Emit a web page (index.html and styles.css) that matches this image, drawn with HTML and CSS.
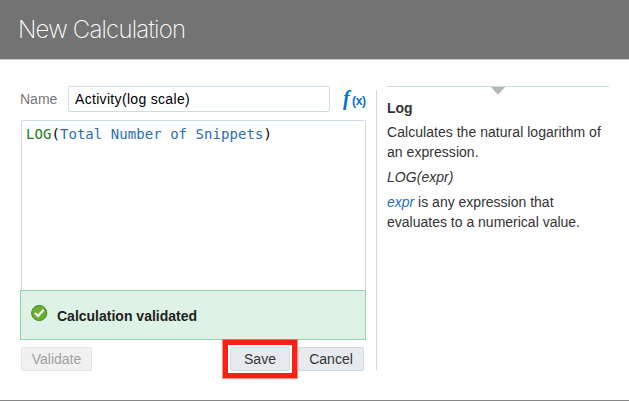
FILE: index.html
```html
<!DOCTYPE html>
<html lang="en">
<head>
<meta charset="utf-8">
<title>New Calculation</title>
<link rel="stylesheet" href="styles.css">
</head>
<body>
<div class="dialog">
  <header class="header"><h1>New Calculation</h1></header>
  <main class="body">
    <section class="editor">
      <div class="name-row">
        <label class="name-label">Name</label>
        <div class="name-input"><span>Activity(log scale)</span></div>
        <div class="fx"><span class="fx-f">f</span><span class="fx-x">(x)</span></div>
      </div>
      <div class="formula"><span class="fn">LOG</span>(<span class="col">Total Number of Snippets</span>)</div>
      <div class="message">
        <svg class="check" viewBox="0 0 17 17" width="17" height="17">
          <circle cx="8.2" cy="8" r="7.6" fill="#6aae2d" stroke="#468c2b" stroke-width="1"/>
          <path d="M3.9 8 7 10.9 12.7 4.8" fill="none" stroke="#fff" stroke-width="2.2"/>
        </svg>
        <strong>Calculation validated</strong>
      </div>
      <div class="buttons">
        <button class="btn validate" disabled>Validate</button>
        <div class="save-wrap"><button class="btn save">Save</button><span class="highlight"></span></div>
        <button class="btn cancel">Cancel</button>
      </div>
    </section>
    <aside class="help">
      <div class="collapse"><svg width="14" height="8" viewBox="0 0 14 8"><path d="M0 0H14L7 7.7Z" fill="#b7b7b7"/></svg></div>
      <h2>Log</h2>
      <p class="desc">Calculates the natural logarithm of<br>an expression.</p>
      <p class="syntax"><i>LOG(expr)</i></p>
      <p class="arg"><i class="expr">expr</i> is any expression that<br>evaluates to a numerical value.</p>
    </aside>
  </main>
</div>
</body>
</html>
```
FILE: styles.css
```css
* { box-sizing: border-box; }
body {
  margin: 0;
  background: #fff;
  color: #333;
  font-family: "Liberation Sans", Arial, sans-serif;
  font-size: 14px;
  overflow: hidden;
}
.dialog { height: 401px; border-bottom: 1px solid #858585; }
.header {
  height: 60px;
  padding-left: 18px;
  background: #737373;
  border-bottom: 1px solid #c3ccd1;
}
h1 {
  margin: 0;
  color: #fff;
  font-family: Inter, "Liberation Sans", sans-serif;
  font-size: 24px;
  font-weight: 250;
  letter-spacing: -0.8px;
  line-height: 60px;
  white-space: nowrap;
}
.body { display: flex; padding: 26px 20px 0; }
.editor { width: 346px; }
.name-row { display: flex; height: 26px; align-items: center; }
.name-label { width: 48px; color: #777; }
.name-input {
  display: flex;
  align-items: center;
  width: 262px;
  height: 26px;
  padding-left: 6px;
  border: 1px solid #cddde5;
  border-radius: 2px;
  color: #000;
}
.name-input span { letter-spacing: 0.32px; }
.fx {
  display: flex;
  align-items: baseline;
  margin-left: 13px;
  color: #0572ce;
  font-weight: bold;
  line-height: 22px;
}
.fx-f { font: italic bold 20px/22px "Liberation Serif", serif; width: 9px; }
.fx-x { font-size: 12px; letter-spacing: -0.3px; }
.formula {
  height: 170px;
  margin: 8px 0 0 1px;
  padding: 5px 0 0 4px;
  border: 1px solid #cddde5;
  border-bottom: 0;
  border-radius: 2px 2px 0 0;
  color: #000;
  font: 14px/17px "DejaVu Sans Mono", monospace;
  letter-spacing: 0.05px;
  white-space: nowrap;
}
.fn { color: #178017; }
.col { color: #2a6db5; }
.message {
  display: flex;
  height: 50px;
  padding: 14px 0 0 10px;
  background: #dff2e6;
  border: 1px solid #96d2b0;
  color: #222;
}
.message strong { margin: 3px 0 0 9px; line-height: 17px; }
.buttons { display: flex; padding: 7px 0 0 1px; }
.btn {
  height: 24px;
  padding: 0;
  border: 1px solid #d0dae2;
  border-radius: 2px;
  background: #e7eaee;
  color: #333;
  font: 14px/22px "Liberation Sans", Arial, sans-serif;
}
.validate { width: 71px; background: #f1f1f1; border-color: #e5e5e5; color: #a0a0a0; }
.save-wrap { position: relative; margin-left: 138px; }
.save { width: 60px; }
.cancel { width: 66px; margin-left: 8px; }
.highlight {
  position: absolute;
  top: -7px;
  left: -7px;
  width: 74px;
  height: 38px;
  border: 5px solid #ff2015;
  box-shadow: 0 0 0 1px rgba(255, 32, 21, 0.5);
}
.help {
  position: relative;
  width: 233px;
  height: 280px;
  margin: 4px 0 0 10px;
  padding-left: 10px;
  border-left: 1px solid #cddbe3;
  line-height: 20px;
}
.collapse {
  display: flex;
  justify-content: center;
  height: 8px;
  margin-top: -4px;
  border-top: 1px solid #cddbe3;
}
.collapse svg { flex: none; }
.help h2 { margin: 4px 0 4px; font-size: 14px; line-height: 20px; }
.help p { margin: 0; white-space: nowrap; letter-spacing: 0.04px; }
.help .syntax, .help .arg { margin-top: 5px; }
.help .arg { letter-spacing: 0; }
.expr { color: #2a6db5; }
```
